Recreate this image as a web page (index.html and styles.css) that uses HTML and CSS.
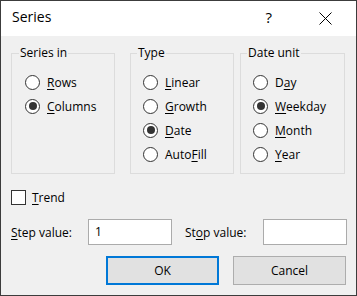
FILE: index.html
```html
<!DOCTYPE html>
<html lang="en">
<head>
    <meta charset="UTF-8">
    <title>Series</title>
    <link rel="stylesheet" href="styles.css">
</head>
<body>
    <div class="dialog">
        <div class="titlebar">
            <span class="title">Series</span>
            <span class="help">?</span>
            <svg class="close" width="13" height="13" viewBox="0 0 13 13">
                <path d="M0.5 0.5L12.5 12.5M12.5 0.5L0.5 12.5" stroke="#000" stroke-width="1" fill="none"/>
            </svg>
        </div>

        <div class="content">
            <div class="groups">
                <fieldset class="group group-series">
                    <legend>Series in</legend>
                    <div class="options">
                        <div class="option"><span class="radio"></span><span><u>R</u>ows</span></div>
                        <div class="option"><span class="radio checked"></span><span><u>C</u>olumns</span></div>
                    </div>
                </fieldset>

                <fieldset class="group group-type">
                    <legend>Type</legend>
                    <div class="options">
                        <div class="option"><span class="radio"></span><span><u>L</u>inear</span></div>
                        <div class="option"><span class="radio"></span><span><u>G</u>rowth</span></div>
                        <div class="option"><span class="radio checked"></span><span><u>D</u>ate</span></div>
                        <div class="option"><span class="radio"></span><span>Auto<u>F</u>ill</span></div>
                    </div>
                </fieldset>

                <fieldset class="group group-unit">
                    <legend>Date unit</legend>
                    <div class="options">
                        <div class="option"><span class="radio"></span><span>D<u>a</u>y</span></div>
                        <div class="option"><span class="radio checked"></span><span><u>W</u>eekday</span></div>
                        <div class="option"><span class="radio"></span><span><u>M</u>onth</span></div>
                        <div class="option"><span class="radio"></span><span><u>Y</u>ear</span></div>
                    </div>
                </fieldset>
            </div>

            <div class="trend">
                <span class="checkbox"></span><span><u>T</u>rend</span>
            </div>

            <div class="values">
                <label><u>S</u>tep value:</label>
                <div class="field">1</div>
                <span></span>
                <label>St<u>o</u>p value:</label>
                <div class="field"></div>
            </div>

            <div class="buttons">
                <button class="btn default">OK</button>
                <button class="btn">Cancel</button>
            </div>
        </div>
    </div>
</body>
</html>
```

FILE: styles.css
```css
body {
    margin: 0;
    padding: 0;
    font-family: "Open Sans", "Noto Sans", sans-serif;
    font-size: 12px;
    color: #000;
    background: #f0f0f0;
}

.dialog {
    width: 357px;
    height: 296px;
    box-sizing: border-box;
    border: 1px solid #3c3c3c;
    background: #f0f0f0;
    overflow: hidden;
}

.titlebar {
    height: 35px;
    background: #fff;
    display: flex;
    align-items: flex-start;
}

.title {
    font-size: 14px;
    line-height: 20px;
    margin: 6px 0 0 11px;
    flex: 1;
}

.help {
    font-size: 15px;
    line-height: 20px;
    margin: 6px 47px 0 0;
}

.close {
    margin: 11px 24px 0 0;
}

.content {
    padding: 9px 9px 0 10px;
}

.groups {
    display: flex;
}

.group {
    margin: 0;
    padding: 0;
    height: 129px;
    box-sizing: border-box;
    border: 1px solid #dcdcdc;
    min-width: 0;
}

.group legend {
    padding: 0 1px;
    margin-left: 6px;
    line-height: 16px;
}

.group-series {
    width: 104px;
}

.group-series legend {
    margin-left: 7px;
}

.group-type {
    width: 104px;
    margin-left: 15px;
}

.group-unit {
    width: 105px;
    margin-left: 6px;
}

.options {
    margin-top: 9px;
    padding-left: 12px;
}

.group-series .options {
    padding-left: 13px;
}

.option {
    display: flex;
    align-items: center;
    height: 24px;
}

.radio {
    width: 15px;
    height: 15px;
    box-sizing: border-box;
    border: 1px solid #333;
    border-radius: 50%;
    background: #fff;
    margin-right: 7px;
    display: flex;
    align-items: center;
    justify-content: center;
}

.radio.checked::after {
    content: "";
    width: 8px;
    height: 8px;
    border-radius: 50%;
    background: #333;
}

u {
    text-decoration: underline;
    text-underline-offset: 2px;
}

.trend {
    display: flex;
    align-items: center;
    height: 16px;
    margin-top: 15px;
}

.checkbox {
    width: 15px;
    height: 15px;
    box-sizing: border-box;
    border: 1px solid #333;
    background: #fff;
    margin-right: 6px;
}

.values {
    display: grid;
    grid-template-columns: 77px 84px 13px 78px 84px;
    align-items: center;
    margin-top: 14px;
}

.field {
    height: 26px;
    box-sizing: border-box;
    border: 1px solid #ababab;
    background: #fff;
    padding-left: 6px;
    line-height: 23px;
}

.buttons {
    display: flex;
    justify-content: flex-end;
    gap: 14px;
    margin-top: 11px;
    margin-right: 1px;
}

.btn {
    width: 113px;
    height: 29px;
    box-sizing: border-box;
    border: 1px solid #adadad;
    background: #e1e1e1;
    font-family: "Open Sans", "Noto Sans", sans-serif;
    font-size: 12px;
    color: #000;
    padding: 0;
}

.btn.default {
    border: 2px solid #0078d7;
}
```
